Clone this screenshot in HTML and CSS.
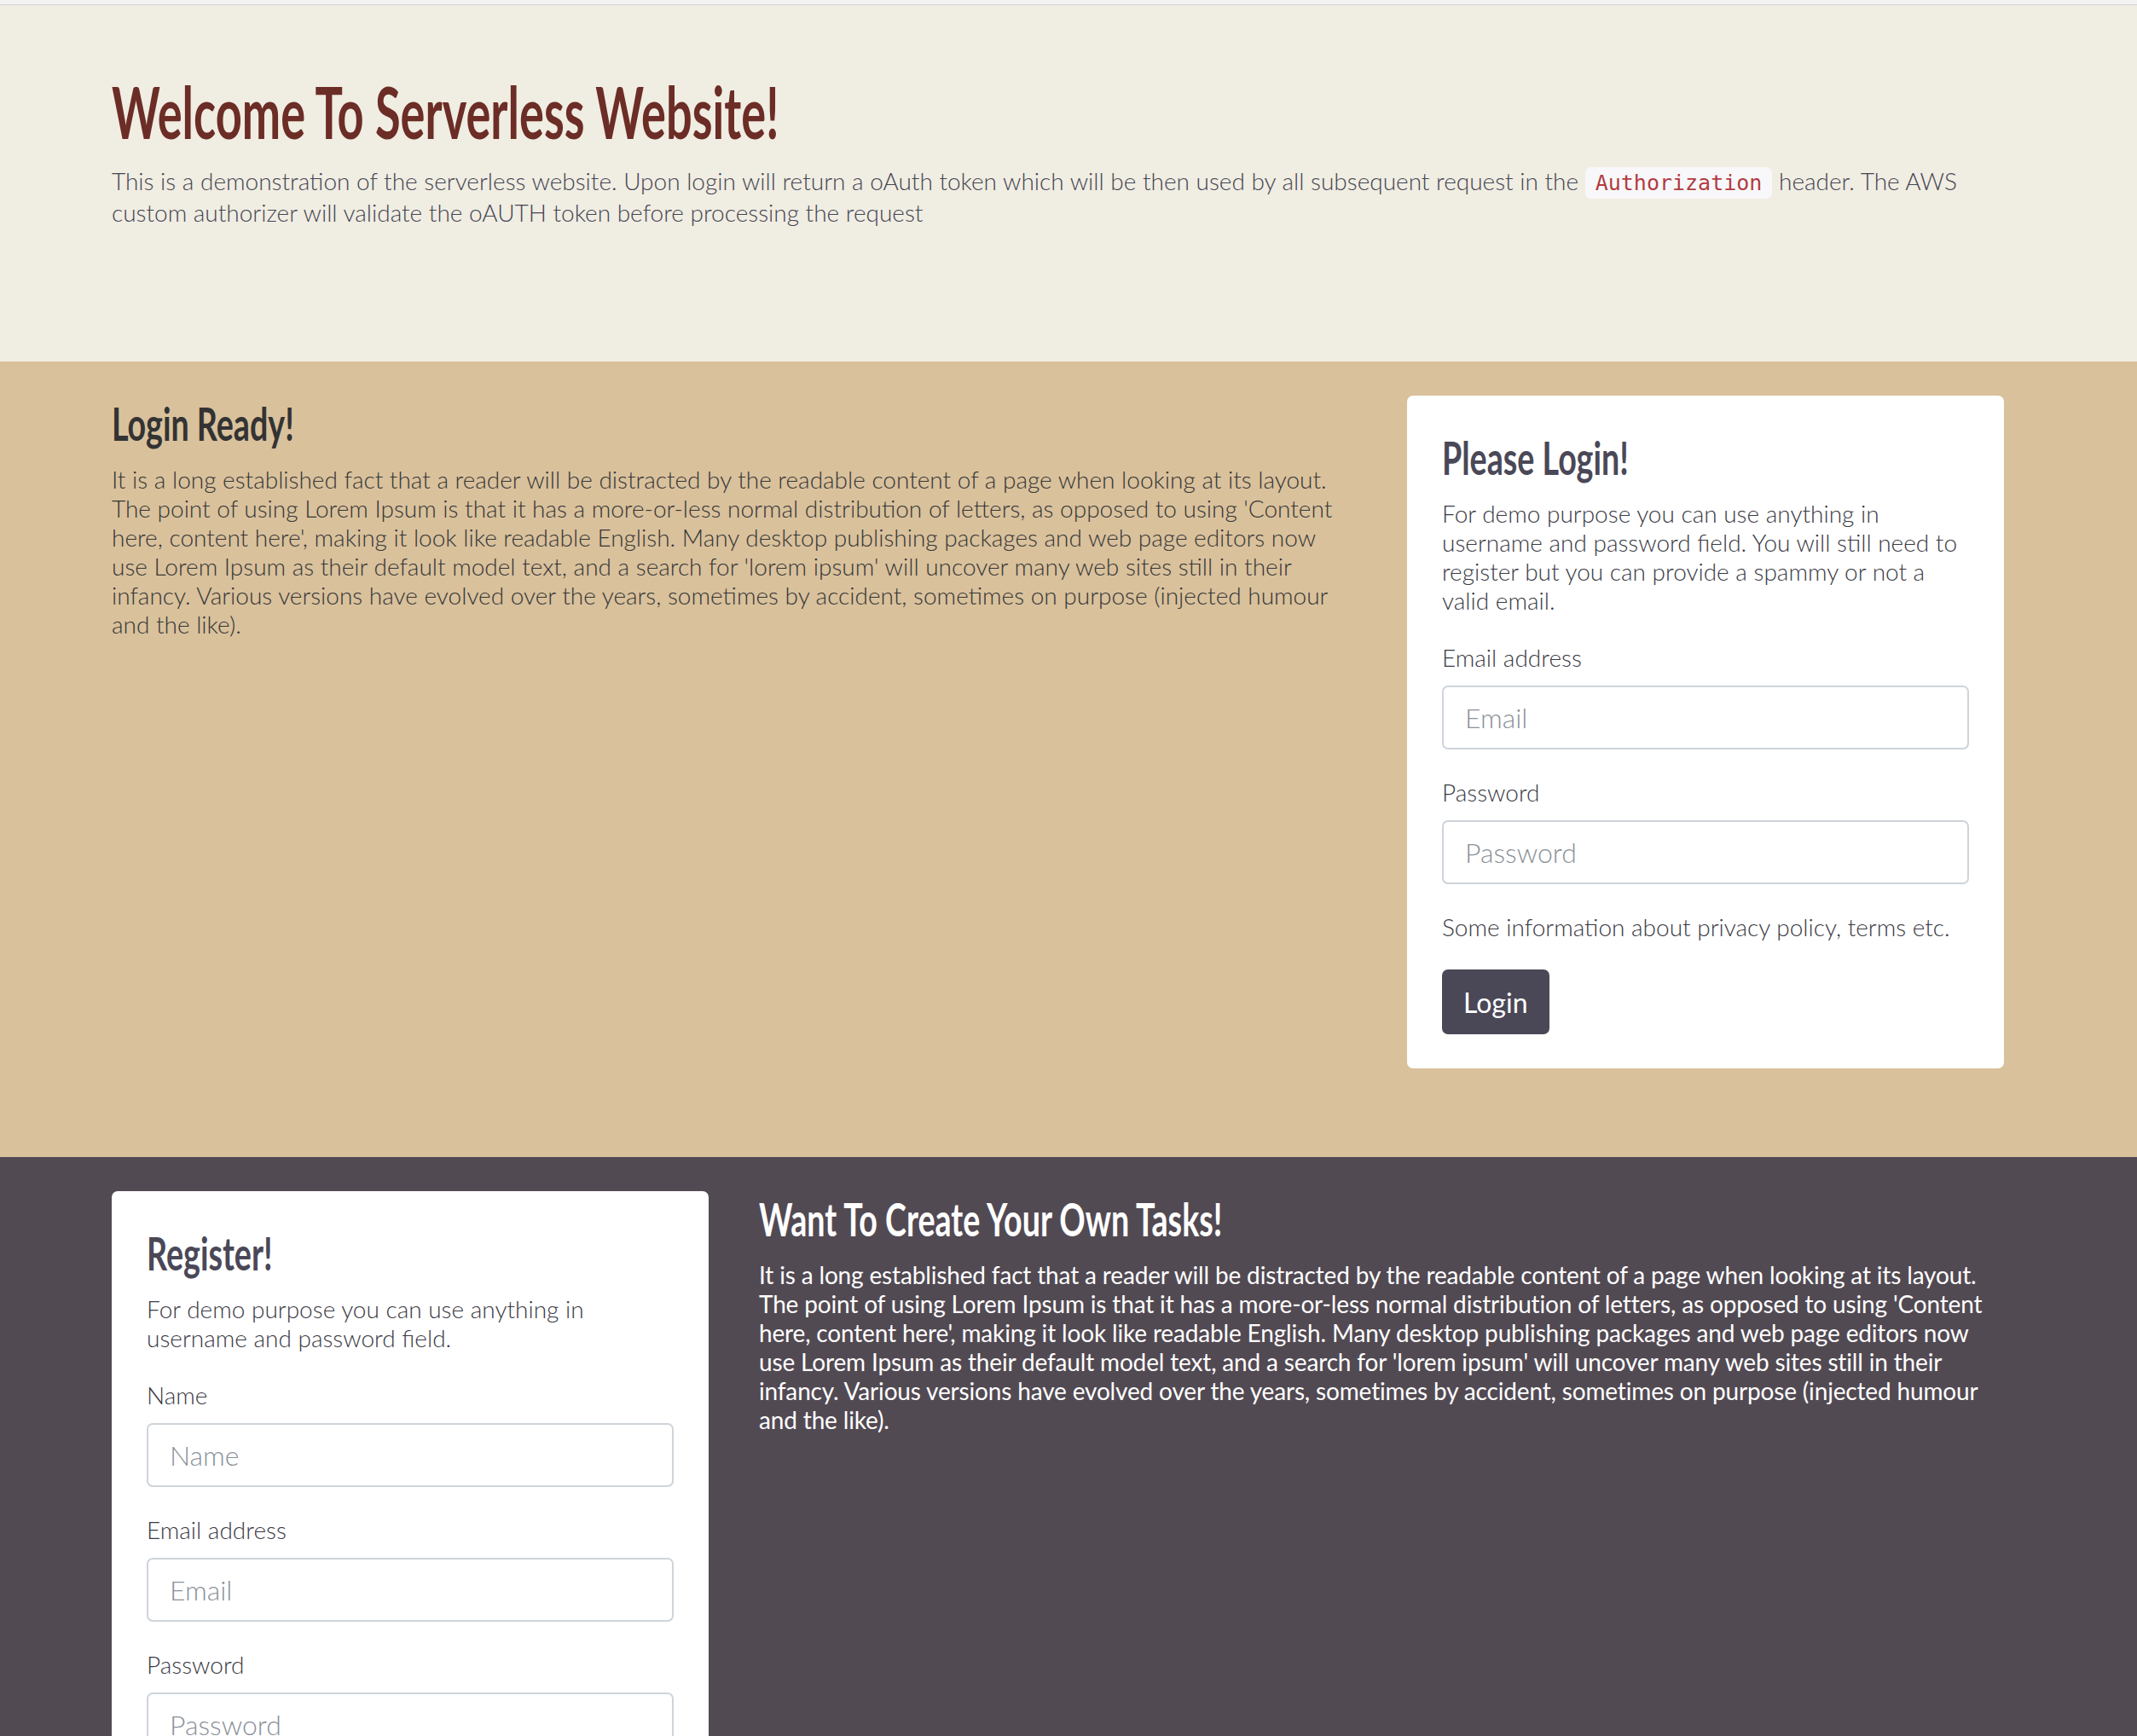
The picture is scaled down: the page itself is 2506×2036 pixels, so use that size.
FILE: index.html
```html
<!DOCTYPE html>
<html lang="en">
<head>
<meta charset="utf-8">
<title>Serverless Website</title>
<link rel="stylesheet" href="styles.css">
</head>
<body>
<div class="topbar"></div>
<header class="jumbo">
  <div class="container">
    <h1 class="display"><span class="condensed">Welcome To Serverless Website!</span></h1>
    <p class="lead">This is a demonstration of the serverless website. Upon login will return a oAuth token which will be then used by all subsequent request in the <code>Authorization</code> header. The AWS custom authorizer will validate the oAUTH token before processing the request</p>
  </div>
</header>

<section class="band band-tan">
  <div class="container grid grid-login">
    <div class="copy">
      <h2 class="title"><span class="condensed">Login Ready!</span></h2>
      <p class="text">It is a long established fact that a reader will be distracted by the readable content of a page when looking at its layout. The point of using Lorem Ipsum is that it has a more-or-less normal distribution of letters, as opposed to using 'Content here, content here', making it look like readable English. Many desktop publishing packages and web page editors now use Lorem Ipsum as their default model text, and a search for 'lorem ipsum' will uncover many web sites still in their infancy. Various versions have evolved over the years, sometimes by accident, sometimes on purpose (injected humour and the like).</p>
    </div>
    <form class="card">
      <h2 class="title card-title"><span class="condensed">Please Login!</span></h2>
      <p class="text">For demo purpose you can use anything in username and password field. You will still need to register but you can provide a spammy or not a valid email.</p>
      <div class="field">
        <label class="label" for="login-email">Email address</label>
        <input class="input" id="login-email" type="email" placeholder="Email">
      </div>
      <div class="field">
        <label class="label" for="login-pass">Password</label>
        <input class="input" id="login-pass" type="password" placeholder="Password">
      </div>
      <p class="text">Some information about privacy policy, terms etc.</p>
      <button class="btn" type="button">Login</button>
    </form>
  </div>
</section>

<section class="band band-dark">
  <div class="container grid grid-register">
    <form class="card">
      <h2 class="title card-title"><span class="condensed">Register!</span></h2>
      <p class="text">For demo purpose you can use anything in username and password field.</p>
      <div class="field">
        <label class="label" for="reg-name">Name</label>
        <input class="input" id="reg-name" type="text" placeholder="Name">
      </div>
      <div class="field">
        <label class="label" for="reg-email">Email address</label>
        <input class="input" id="reg-email" type="email" placeholder="Email">
      </div>
      <div class="field">
        <label class="label" for="reg-pass">Password</label>
        <input class="input" id="reg-pass" type="password" placeholder="Password">
      </div>
    </form>
    <div class="copy copy-light">
      <h2 class="title"><span class="condensed">Want To Create Your Own Tasks!</span></h2>
      <p class="text">It is a long established fact that a reader will be distracted by the readable content of a page when looking at its layout. The point of using Lorem Ipsum is that it has a more-or-less normal distribution of letters, as opposed to using 'Content here, content here', making it look like readable English. Many desktop publishing packages and web page editors now use Lorem Ipsum as their default model text, and a search for 'lorem ipsum' will uncover many web sites still in their infancy. Various versions have evolved over the years, sometimes by accident, sometimes on purpose (injected humour and the like).</p>
    </div>
  </div>
</section>
</body>
</html>
```

FILE: styles.css
```css
* { box-sizing: border-box; }

html, body {
  margin: 0;
  padding: 0;
}

body {
  font-family: Lato, "Open Sans", "Liberation Sans", sans-serif;
  font-weight: 300;
  font-size: 28px;
  line-height: 34px;
  color: #363636;
  background: #524a53;
}

.topbar {
  height: 6px;
  background: #f3f3f3;
  border-bottom: 1px solid #d6d6d6;
}

.container {
  margin-left: 131px;
  width: 2219px;
}

.condensed {
  display: inline-block;
  transform: scaleX(0.71);
  transform-origin: left center;
  white-space: nowrap;
}

/* Jumbotron */
.jumbo {
  background: #f0ede2;
  padding: 83px 0 126px;
}

.display {
  margin: 0 0 22px;
  font-family: Lato, sans-serif;
  font-weight: 700;
  font-size: 84px;
  line-height: 84px;
  color: #6b2d26;
}

.display .condensed {
  transform: scaleX(0.645);
}

.lead {
  margin: 0 0 32px;
  color: #454553;
}

code {
  font-family: "DejaVu Sans Mono", "Liberation Mono", monospace;
  font-size: 25px;
  font-weight: 400;
  color: #b23b3f;
  background: #f8f8fa;
  border-radius: 7px;
  padding: 4px 12px;
}

/* Bands */
.band {
  padding: 40px 0 104px;
}

.band-tan {
  background: #d9c19c;
}

.band-dark {
  background: #524a53;
  padding-bottom: 120px;
}

.grid {
  display: grid;
  align-items: start;
}

.grid-login {
  grid-template-columns: 1fr 700px;
  column-gap: 61px;
}

.grid-register {
  grid-template-columns: 700px 1fr;
  column-gap: 59px;
}

.title {
  margin: 0 0 15px;
  font-family: Lato, sans-serif;
  font-weight: 700;
  font-size: 53px;
  line-height: 66px;
  color: #333333;
}

.text {
  margin: 0 0 33px;
}

.copy .text {
  margin: 0;
}

.copy-light .title,
.copy-light .text {
  color: #ffffff;
}

.copy-light .text {
  font-weight: 400;
  letter-spacing: -0.16px;
}

/* Card */
.card {
  background: #ffffff;
  border-radius: 7px;
  padding: 40px 41px 40px;
  margin: 0;
}

.card-title {
  color: #4a4857;
}

.card .text {
  color: #3a3a44;
}

.field {
  margin-bottom: 33px;
}

.label {
  display: block;
  margin-bottom: 16px;
  color: #3a3a44;
}

.input {
  display: block;
  width: 100%;
  height: 75px;
  padding: 0 25px;
  border: 2px solid #ced4da;
  border-radius: 7px;
  background: #ffffff;
  font-family: Lato, sans-serif;
  font-weight: 300;
  font-size: 32px;
  color: #495057;
  outline: none;
}

.input::placeholder {
  color: #8a9199;
  opacity: 1;
}

.btn {
  display: inline-block;
  height: 76px;
  padding: 0 25px;
  border: none;
  border-radius: 7px;
  background: #4a4857;
  color: #ffffff;
  font-family: Lato, sans-serif;
  font-weight: 400;
  font-size: 32px;
  cursor: pointer;
}
```
